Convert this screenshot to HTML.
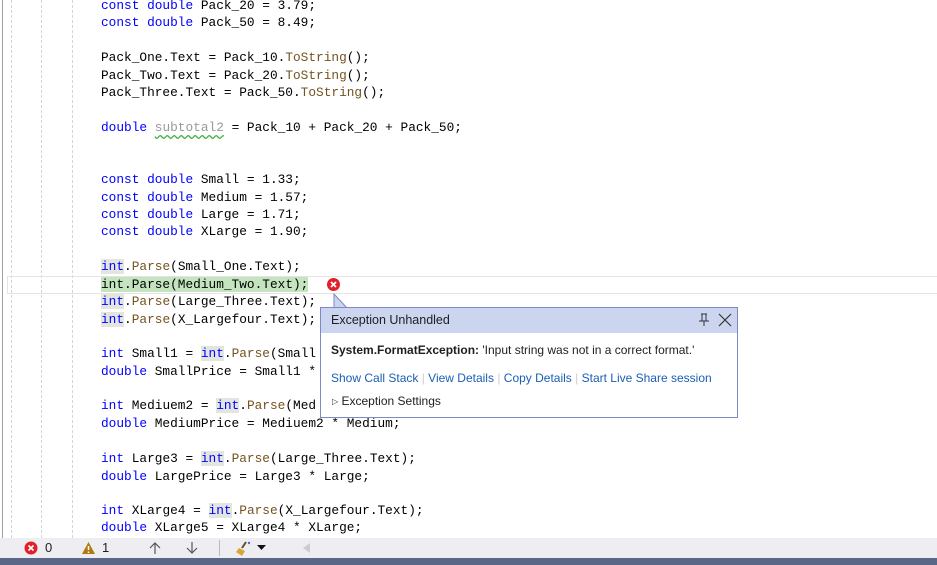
<!DOCTYPE html>
<html><head><style>
body{margin:0;width:937px;height:565px;overflow:hidden;background:#fff;position:relative;font-family:"Liberation Mono",monospace}
.l{position:absolute;left:101px;height:17px;line-height:17px;font-size:12.8px;white-space:pre;color:#000;margin-top:1px}
.k{color:#0000ff}.m{color:#74531f}
.ih{background:#e2e6de}
.dash{position:absolute;top:0;height:538px;border-left:1px dashed #d4d4d4}
.ui{font-family:"Liberation Sans",sans-serif}
</style></head><body>
<div style="position:absolute;left:2px;top:0;height:538px;border-left:1px solid #a0a0a0"></div>
<div class="dash" style="left:11px"></div>
<div class="dash" style="left:41px"></div>
<div class="dash" style="left:72px"></div>
<div style="position:absolute;left:7px;top:276px;width:930px;height:16px;border:1px solid #e4e4e4;border-right:none"></div>

<div class="l" style="top:-4px"><span class="k">const double</span> Pack_20 = 3.79;</div>
<div class="l" style="top:13px"><span class="k">const double</span> Pack_50 = 8.49;</div>
<div class="l" style="top:48px">Pack_One.Text = Pack_10.<span class="m">ToString</span>();</div>
<div class="l" style="top:66px">Pack_Two.Text = Pack_20.<span class="m">ToString</span>();</div>
<div class="l" style="top:83px">Pack_Three.Text = Pack_50.<span class="m">ToString</span>();</div>
<div class="l" style="top:118px"><span class="k">double</span> <span style="color:#9a9a9a;text-decoration:underline wavy #3cb043;text-underline-offset:3px">subtotal2</span> = Pack_10 + Pack_20 + Pack_50;</div>
<div class="l" style="top:170px"><span class="k">const double</span> Small = 1.33;</div>
<div class="l" style="top:188px"><span class="k">const double</span> Medium = 1.57;</div>
<div class="l" style="top:205px"><span class="k">const double</span> Large = 1.71;</div>
<div class="l" style="top:222px"><span class="k">const double</span> XLarge = 1.90;</div>
<div class="l" style="top:257px"><span class="k ih">int</span>.<span class="m">Parse</span>(Small_One.Text);</div>
<div class="l" style="top:275px"><span style="background:#c4e4c0">int.<span>Parse</span>(Medium_Two.Text);</span></div>
<div class="l" style="top:292px"><span class="k ih">int</span>.<span class="m">Parse</span>(Large_Three.Text);</div>
<div class="l" style="top:310px"><span class="k ih">int</span>.<span class="m">Parse</span>(X_Largefour.Text);</div>
<div class="l" style="top:344px"><span class="k">int</span> Small1 = <span class="k ih">int</span>.<span class="m">Parse</span>(Small</div>
<div class="l" style="top:362px"><span class="k">double</span> SmallPrice = Small1 *</div>
<div class="l" style="top:396px"><span class="k">int</span> Mediuem2 = <span class="k ih">int</span>.<span class="m">Parse</span>(Med</div>
<div class="l" style="top:414px"><span class="k">double</span> MediumPrice = Mediuem2 * Medium;</div>
<div class="l" style="top:449px"><span class="k">int</span> Large3 = <span class="k ih">int</span>.<span class="m">Parse</span>(Large_Three.Text);</div>
<div class="l" style="top:467px"><span class="k">double</span> LargePrice = Large3 * Large;</div>
<div class="l" style="top:501px"><span class="k">int</span> XLarge4 = <span class="k ih">int</span>.<span class="m">Parse</span>(X_Largefour.Text);</div>
<div class="l" style="top:518px"><span class="k">double</span> XLarge5 = XLarge4 * XLarge;</div>

<svg style="position:absolute;left:326px;top:277px" width="15" height="15"><circle cx="7.5" cy="7.5" r="6.5" fill="#e0202a"/><path d="M5 5l5 5M10 5l-5 5" stroke="#fff" stroke-width="1.8"/></svg>

<svg style="position:absolute;left:333px;top:293px" width="20" height="16"><path d="M1 15V1L14 15" fill="#ccd5f0" stroke="#7b8ac4"/></svg>
<div class="ui" style="position:absolute;left:320px;top:307px;width:416px;height:109px;border:1px solid #7b8ac4;background:#fff;">
 <div style="height:25px;background:#ccd5f0;font-size:12.5px;line-height:25px;padding-left:10px;color:#1e1e1e">Exception Unhandled</div>
 <svg style="position:absolute;left:376px;top:5px" width="14" height="14"><path d="M4 1h6M5 1v7M9 1v7M2 8h10M7 8v5" stroke="#333" fill="none"/></svg>
 <svg style="position:absolute;left:397px;top:5px" width="14" height="14"><path d="M1 1l12 12M13 1L1 13" stroke="#333" stroke-width="1.2"/></svg>
 <div style="position:absolute;left:10px;top:35px;font-size:12px;color:#1e1e1e;white-space:nowrap"><b>System.FormatException:</b> 'Input string was not in a correct format.'</div>
 <div style="position:absolute;left:10px;top:63px;font-size:12px;color:#1a5fb4;white-space:nowrap">Show Call Stack <span style="color:#ccc">|</span> View Details <span style="color:#ccc">|</span> Copy Details <span style="color:#ccc">|</span> Start Live Share session</div>
 <div style="position:absolute;left:11px;top:86px;font-size:12px;color:#1e1e1e;white-space:nowrap"><span style="font-size:8px;vertical-align:1px">&#9655;</span> Exception Settings</div>
</div>

<div class="ui" style="position:absolute;left:0;top:538px;width:937px;height:20px;background:#eeeef2;font-size:13px;color:#1e1e1e">
 <svg style="position:absolute;left:24px;top:3px" width="14" height="14"><circle cx="7" cy="7" r="6.5" fill="#e0202a"/><path d="M4.5 4.5l5 5M9.5 4.5l-5 5" stroke="#fff" stroke-width="1.6"/></svg>
 <span style="position:absolute;left:45px;top:2px">0</span>
 <svg style="position:absolute;left:81px;top:3px" width="15" height="14"><path d="M7.5 1L14 13H1z" fill="#b07a10"/><path d="M7.5 5v4M7.5 10.5v1.5" stroke="#fff" stroke-width="1.5"/></svg>
 <span style="position:absolute;left:102px;top:2px">1</span>
 <svg style="position:absolute;left:148px;top:3px" width="14" height="14"><path d="M7 13V2M2 7l5-5 5 5" stroke="#555" fill="none" stroke-width="1.2"/></svg>
 <svg style="position:absolute;left:185px;top:3px" width="14" height="14"><path d="M7 1v11M2 7l5 5 5-5" stroke="#555" fill="none" stroke-width="1.2"/></svg>
 <div style="position:absolute;left:219px;top:2px;width:1px;height:16px;background:#bbb"></div>
 <svg style="position:absolute;left:235px;top:2px" width="20" height="16"><path d="M11 2L7 8" stroke="#6a4a20" stroke-width="2"/><path d="M4 8l6 3-3 5-6-4z" fill="#d6a63a"/><circle cx="14" cy="3" r="1.2" fill="#3a6fd8"/></svg>
 <svg style="position:absolute;left:257px;top:7px" width="9" height="6"><path d="M0 0h9L4.5 5z" fill="#111"/></svg>
 <svg style="position:absolute;left:303px;top:5px" width="8" height="10"><path d="M7 0v10L0 5z" fill="#ccc"/></svg>
</div>
<div style="position:absolute;left:0;top:558px;width:937px;height:7px;background:#5b6786"></div>
</body></html>
